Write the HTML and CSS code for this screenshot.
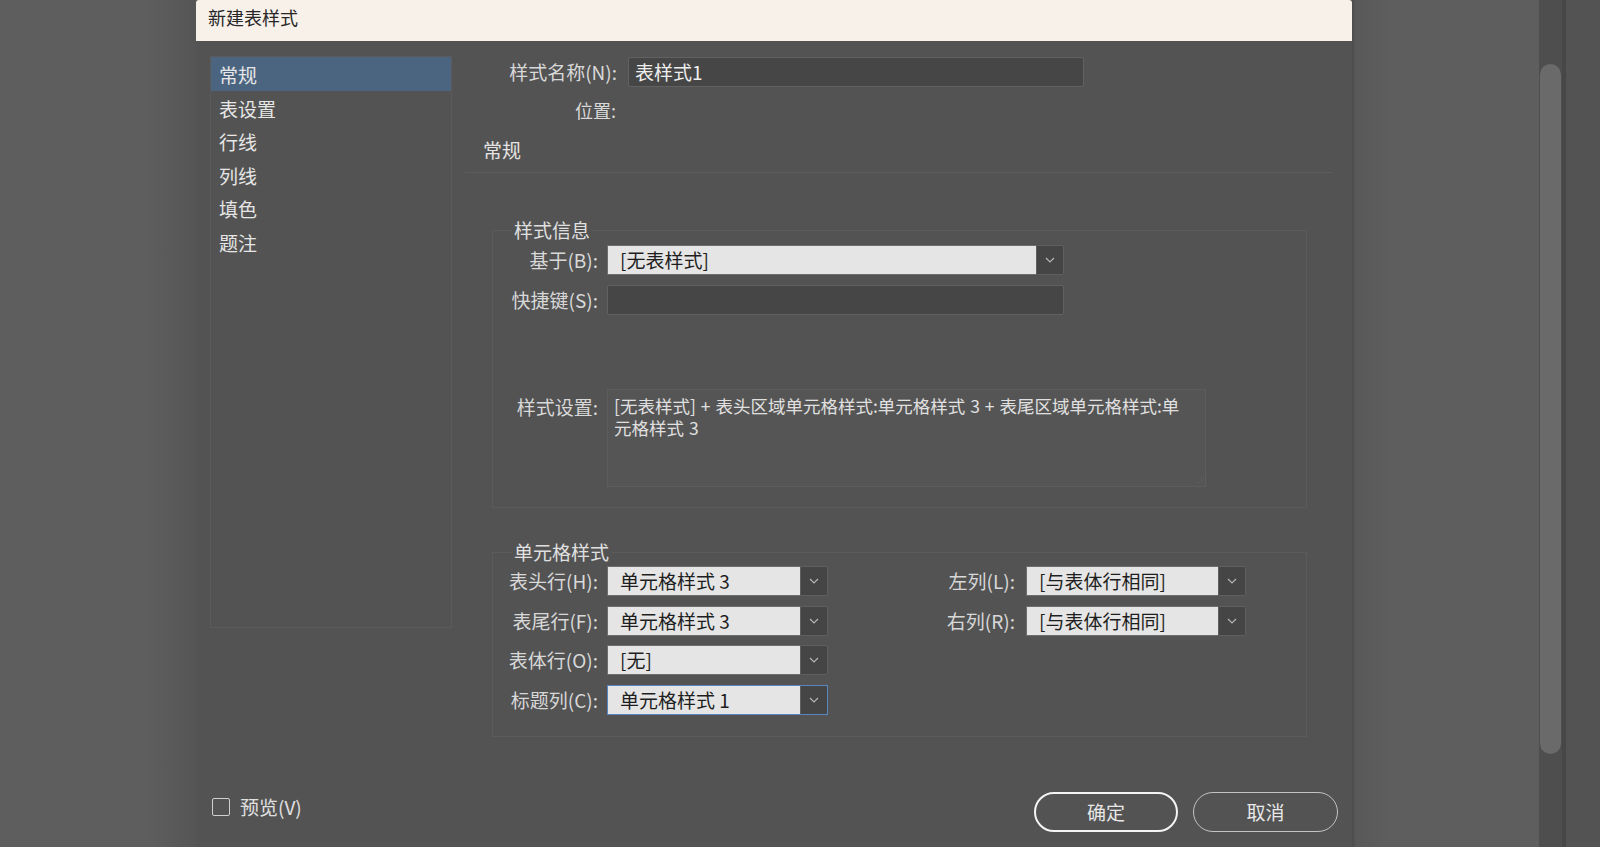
FILE: index.html
```html
<!DOCTYPE html>
<html lang="zh-CN">

<head>
    <meta charset="utf-8">
    <title>新建表样式</title>
    <link rel="stylesheet" href="styles.css">
</head>

<body>
    <div class="desk">
        <div class="backdrop-left"></div>

        <div class="dialog">
            <div class="dialog-title">新建表样式</div>

            <div class="dialog-main">
                <ul class="nav-list">
                    <li class="active">常规</li>
                    <li>表设置</li>
                    <li>行线</li>
                    <li>列线</li>
                    <li>填色</li>
                    <li>题注</li>
                </ul>

                <div class="pane">
                    <div class="field-row name-row">
                        <span class="field-label">样式名称(N):</span>
                        <div class="text-input name-input">表样式1</div>
                    </div>
                    <div class="field-row loc-row">
                        <span class="field-label loc-label">位置:</span>
                    </div>

                    <h2 class="pane-heading">常规</h2>

                    <fieldset class="group info-group">
                        <legend>样式信息</legend>
                        <div class="group-row">
                            <span class="group-label">基于(B):</span>
                            <div class="select select-wide">
                                <span class="select-value">[无表样式]</span>
                                <span class="select-btn"><svg width="10" height="6" viewBox="0 0 10 6"><path d="M1 1l4 4 4-4" fill="none" stroke="#b5b5b5" stroke-width="1.2"/></svg></span>
                            </div>
                        </div>
                        <div class="group-row row-gap">
                            <span class="group-label">快捷键(S):</span>
                            <div class="text-input shortcut-input"></div>
                        </div>
                        <div class="group-row settings-row">
                            <span class="group-label settings-label">样式设置:</span>
                            <div class="settings-box">[无表样式] + 表头区域单元格样式:单元格样式 3 + 表尾区域单元格样式:单<br>元格样式 3<span class="grip"></span></div>
                        </div>
                    </fieldset>

                    <fieldset class="group cell-group">
                        <legend>单元格样式</legend>
                        <div class="cell-cols">
                            <div class="cell-grid cell-left">
                                <span class="cell-label">表头行(H):</span>
                                <div class="select">
                                    <span class="select-value">单元格样式 3</span>
                                    <span class="select-btn"><svg width="10" height="6" viewBox="0 0 10 6"><path d="M1 1l4 4 4-4" fill="none" stroke="#b5b5b5" stroke-width="1.2"/></svg></span>
                                </div>
                                <span class="cell-label">表尾行(F):</span>
                                <div class="select">
                                    <span class="select-value">单元格样式 3</span>
                                    <span class="select-btn"><svg width="10" height="6" viewBox="0 0 10 6"><path d="M1 1l4 4 4-4" fill="none" stroke="#b5b5b5" stroke-width="1.2"/></svg></span>
                                </div>
                                <span class="cell-label">表体行(O):</span>
                                <div class="select">
                                    <span class="select-value">[无]</span>
                                    <span class="select-btn"><svg width="10" height="6" viewBox="0 0 10 6"><path d="M1 1l4 4 4-4" fill="none" stroke="#b5b5b5" stroke-width="1.2"/></svg></span>
                                </div>
                                <span class="cell-label">标题列(C):</span>
                                <div class="select focused">
                                    <span class="select-value">单元格样式 1</span>
                                    <span class="select-btn"><svg width="10" height="6" viewBox="0 0 10 6"><path d="M1 1l4 4 4-4" fill="none" stroke="#b5b5b5" stroke-width="1.2"/></svg></span>
                                </div>
                            </div>
                            <div class="cell-grid cell-right">
                                <span class="cell-label">左列(L):</span>
                                <div class="select">
                                    <span class="select-value">[与表体行相同]</span>
                                    <span class="select-btn"><svg width="10" height="6" viewBox="0 0 10 6"><path d="M1 1l4 4 4-4" fill="none" stroke="#b5b5b5" stroke-width="1.2"/></svg></span>
                                </div>
                                <span class="cell-label">右列(R):</span>
                                <div class="select">
                                    <span class="select-value">[与表体行相同]</span>
                                    <span class="select-btn"><svg width="10" height="6" viewBox="0 0 10 6"><path d="M1 1l4 4 4-4" fill="none" stroke="#b5b5b5" stroke-width="1.2"/></svg></span>
                                </div>
                            </div>
                        </div>
                    </fieldset>
                </div>
            </div>

            <div class="dialog-footer">
                <label class="preview">
                    <span class="checkbox"></span>
                    <span>预览(V)</span>
                </label>
                <div class="buttons">
                    <button class="btn btn-primary">确定</button>
                    <button class="btn">取消</button>
                </div>
            </div>
        </div>

        <div class="backdrop-right">
            <div class="backdrop-fill"></div>
            <div class="scroll-track">
                <div class="scroll-thumb"></div>
            </div>
            <div class="scroll-edge"></div>
            <div class="backdrop-rest"></div>
        </div>
    </div>
</body>

</html>
```

FILE: styles.css
```css
body {
    margin: 0;
    height: 847px;
    overflow: hidden;
    background-color: #5e5e5e;
    font-family: "Noto Sans CJK SC", sans-serif;
    color: #d8d8d8;
}

.desk {
    display: flex;
    height: 847px;
}

.backdrop-left {
    width: 196px;
    flex: none;
    background: linear-gradient(to right, #5e5e5e 75%, #555555);
}

/* dialog */
.dialog {
    width: 1156px;
    flex: none;
    height: 880px;
    background-color: #535353;
    display: flex;
    flex-direction: column;
}

.dialog-title {
    height: 41px;
    box-sizing: border-box;
    padding: 0 0 6px 12px;
    line-height: 35px;
    font-size: 18px;
    color: #262626;
    background-color: #f7f1ea;
    border-top-left-radius: 3px;
    border-top-right-radius: 3px;
}

.dialog-main {
    display: grid;
    grid-template-columns: 242px 867px;
    column-gap: 13px;
    align-items: start;
    padding: 15px 0 0 14px;
}

.nav-list {
    margin: 0;
    padding: 0;
    list-style: none;
    height: 572px;
    box-sizing: border-box;
    border: 1px solid #5b5b5b;
}

.nav-list li {
    height: 33.6px;
    box-sizing: border-box;
    padding: 3px 0 0 8px;
    line-height: 30px;
    font-size: 19px;
    color: #e6e6e6;
}

.nav-list li.active {
    background-color: #4b6581;
}

/* right pane */
.pane {
    display: flex;
    flex-direction: column;
}

.field-row {
    display: flex;
    align-items: center;
    gap: 11px;
}

.field-label {
    width: 152px;
    flex: none;
    text-align: right;
    font-size: 19px;
    line-height: 26px;
    color: #d8d8d8;
}

.loc-label {
    width: 151px;
    font-size: 18px;
}

.name-row {
    margin-top: 1px;
    height: 30px;
}

.loc-row {
    margin-top: 10px;
    height: 26px;
}

.text-input {
    height: 30px;
    box-sizing: border-box;
    background-color: #464646;
    border: 1px solid #616161;
    border-radius: 2px;
    font-size: 19px;
    line-height: 28px;
    color: #eeeeee;
}

.name-input {
    width: 456px;
    padding-left: 6px;
}

.pane-heading {
    margin: 14px 0 0;
    padding: 0 0 9px 18px;
    font-size: 19px;
    font-weight: normal;
    line-height: 26px;
    color: #e4e4e4;
    border-bottom: 1px solid #5d5d5d;
}

/* grouped boxes */
.group {
    margin: 0 25px 0 27px;
    border: 1px solid #5b5b5b;
    min-width: 0;
}

.group legend {
    margin-left: 19px;
    padding: 0 2px;
    font-size: 19px;
    line-height: 24px;
    color: #e0e0e0;
}

.info-group {
    margin-top: 45px;
    padding: 3px 0 20px 0;
}

.group-row {
    display: flex;
    align-items: center;
    height: 30px;
}

.row-gap {
    margin-top: 10px;
}

.group-label {
    width: 105px;
    flex: none;
    margin-right: 9px;
    text-align: right;
    font-size: 19px;
    line-height: 24px;
    color: #d8d8d8;
}

.shortcut-input {
    width: 457px;
}

.settings-row {
    margin-top: 74px;
    height: auto;
    align-items: flex-start;
}

.settings-label {
    margin-top: 6px;
}

.settings-box {
    position: relative;
    width: 599px;
    height: 98px;
    box-sizing: border-box;
    padding: 5px 8px 0 6px;
    border: 1px solid #5d5d5d;
    background-color: #555555;
    font-size: 17.5px;
    line-height: 22px;
    word-spacing: 1px;
    color: #e0e0e0;
}

.grip {
    position: absolute;
    right: 3px;
    bottom: 3px;
    width: 5px;
    height: 5px;
    border-right: 1px dotted #5f5f5f;
    border-bottom: 1px dotted #5f5f5f;
}

.cell-group {
    margin-top: 32px;
    padding: 2px 0 21px 0;
}

.cell-cols {
    display: flex;
}

.cell-grid {
    display: grid;
    grid-auto-rows: 30px;
    row-gap: 9.5px;
    align-items: center;
}

.cell-left {
    grid-template-columns: 114px 221px;
}

.cell-right {
    grid-template-columns: 198px 220px;
}

.cell-label {
    padding-right: 9px;
    text-align: right;
    font-size: 19px;
    line-height: 24px;
    color: #d8d8d8;
}

.cell-right .cell-label {
    padding-right: 11px;
}

/* dropdowns */
.select {
    display: flex;
    height: 30px;
}

.select-wide {
    width: 457px;
}

.select-value {
    flex: 1;
    box-sizing: border-box;
    padding-left: 12px;
    background-color: #e5e5e5;
    border: 1px solid #6e6e6e;
    border-right: none;
    font-size: 19px;
    line-height: 28px;
    color: #1e1e1e;
    white-space: nowrap;
}

.select-btn {
    width: 28px;
    flex: none;
    box-sizing: border-box;
    display: flex;
    align-items: center;
    justify-content: center;
    background-color: #454545;
    border: 1px solid #5f5f5f;
    border-radius: 0 2px 2px 0;
}

.select.focused {
    outline: 1px solid #5886bd;
    outline-offset: -1px;
}

/* footer */
.dialog-footer {
    display: flex;
    align-items: center;
    height: 40px;
    margin-top: 55px;
    padding: 0 14px 0 16px;
}

.preview {
    display: flex;
    align-items: center;
    gap: 10px;
    margin-bottom: 10px;
    font-size: 19px;
    color: #e0e0e0;
}

.checkbox {
    width: 18px;
    height: 18px;
    box-sizing: border-box;
    border: 1.5px solid #cfcfcf;
    border-radius: 2px;
}

.buttons {
    margin-left: auto;
    display: flex;
    gap: 15px;
}

.btn {
    width: 145px;
    height: 40px;
    box-sizing: border-box;
    border: 1px solid #c4c4c4;
    border-radius: 20px;
    background: transparent;
    font-family: inherit;
    font-size: 19px;
    color: #e8e8e8;
    cursor: pointer;
}

.btn-primary {
    width: 144px;
    border: 2px solid #f4f4f4;
}

/* right side of the workspace */
.backdrop-right {
    flex: 1;
    display: flex;
}

.backdrop-fill {
    width: 187px;
    background: linear-gradient(to right, #4c4c4c, #595959 4px, #5e5e5e 40px);
}

.scroll-track {
    width: 23px;
    box-sizing: border-box;
    padding: 64px 1px 0 1px;
    background-color: #4e4e4e;
}

.scroll-thumb {
    height: 690px;
    border-radius: 11px;
    background-color: #6a6a6a;
}

.scroll-edge {
    width: 4px;
    background-color: #474747;
}

.backdrop-rest {
    flex: 1;
    background-color: #535353;
}
```
